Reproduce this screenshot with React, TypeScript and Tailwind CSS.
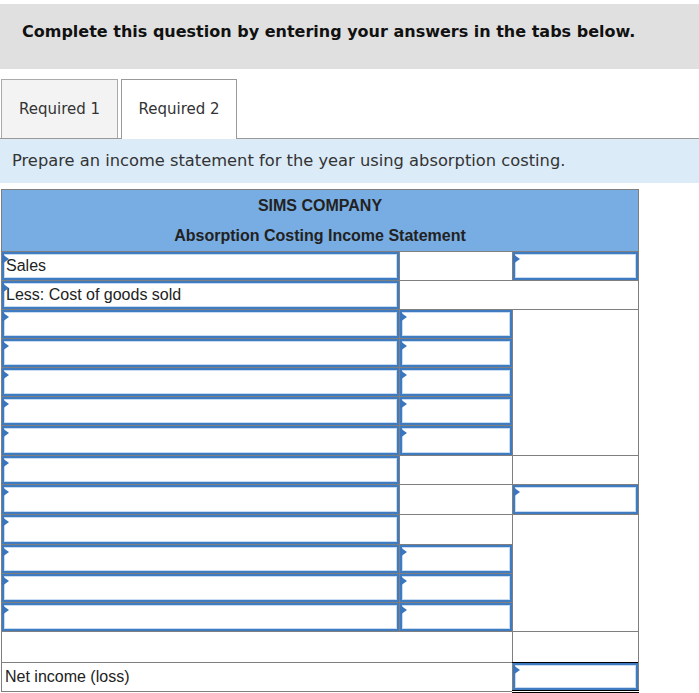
import React from "react";

type Cell =
  | { kind: "input"; text?: string; span?: number; rows?: number; top?: string; bottom?: string }
  | { kind: "empty"; span?: number; rows?: number; top?: string }
  | { kind: "label"; text: string; span?: number };

const Marker = () => (
  <span className="pointer-events-none absolute left-0 top-[2px] h-0 w-0 border-y-[5px] border-l-[7px] border-y-transparent border-l-[#3a76bd]" />
);

const InputBox = ({ text }: { text?: string }) => (
  <div className="relative h-full w-full">
    <div className="h-full w-full border-2 border-[#3f7bc1] bg-white pl-[2px] text-left leading-[24px] shadow-[inset_0_0_0_1px_#c7dcf2]">
      {text}
    </div>
    <Marker />
  </div>
);

const rows: { h: number; cells: Cell[] }[] = [
  { h: 29, cells: [{ kind: "input", text: "Sales" }, { kind: "empty" }, { kind: "input" }] },
  { h: 29, cells: [{ kind: "input", text: "Less: Cost of goods sold" }, { kind: "empty", span: 2 }] },
  { h: 29, cells: [{ kind: "input" }, { kind: "input" }, { kind: "empty", rows: 5 }] },
  { h: 29, cells: [{ kind: "input" }, { kind: "input" }] },
  { h: 29, cells: [{ kind: "input" }, { kind: "input" }] },
  { h: 29, cells: [{ kind: "input" }, { kind: "input" }] },
  { h: 30, cells: [{ kind: "input" }, { kind: "input" }] },
  { h: 29, cells: [{ kind: "input" }, { kind: "empty", top: "black" }, { kind: "empty" }] },
  { h: 30, cells: [{ kind: "input" }, { kind: "empty" }, { kind: "input", top: "black" }] },
  { h: 30, cells: [{ kind: "input" }, { kind: "empty" }, { kind: "empty", rows: 4 }] },
  { h: 29, cells: [{ kind: "input" }, { kind: "input" }] },
  { h: 29, cells: [{ kind: "input" }, { kind: "input" }] },
  { h: 29, cells: [{ kind: "input" }, { kind: "input" }] },
  { h: 31, cells: [{ kind: "empty", span: 2 }, { kind: "empty" }] },
  { h: 29, cells: [{ kind: "label", text: "Net income (loss)", span: 2 }, { kind: "input", top: "black", bottom: "double" }] },
];

export default function App() {
  return (
    <div className="min-h-screen bg-white pt-[4px]">
      <div className="flex h-[65px] items-start bg-[#e0e0e0] pl-[22px] pt-[16px] font-['DejaVu_Sans',Verdana,sans-serif] text-[16px] font-bold text-[#111]">
        Complete this question by entering your answers in the tabs below.
      </div>

      <div className="mt-[10px] flex items-end pl-[1px] font-['DejaVu_Sans',Verdana,sans-serif] text-[15px] text-[#333]">
        <div className="flex h-[59px] w-[117px] items-center justify-center border border-b-0 border-[#aaa] bg-[#f3f3f3]">
          Required 1
        </div>
        <div className="relative z-10 -mb-px ml-[3px] flex h-[60px] w-[116px] items-center justify-center border border-b-0 border-[#999] bg-white">
          Required 2
        </div>
      </div>

      <div className="flex h-[45px] items-center border-t border-[#999] bg-[#dbebf8] pl-[12px] font-['DejaVu_Sans',Verdana,sans-serif] text-[16.3px] text-[#333]">
        Prepare an income statement for the year using absorption costing.
      </div>

      <table className="mt-[6px] ml-[1px] w-[637px] table-fixed border-collapse border border-[#7f7f7f] font-['Liberation_Sans',Arial,sans-serif] text-[16px] text-[#222]">
        <colgroup>
          <col className="w-[398px]" />
          <col className="w-[113px]" />
          <col className="w-[126px]" />
        </colgroup>
        <thead>
          <tr className="bg-[#78ade3]">
            <th colSpan={3} className="h-[31px] pt-[2px] text-center font-bold">
              SIMS COMPANY
            </th>
          </tr>
          <tr className="bg-[#78ade3]">
            <th colSpan={3} className="h-[31px] text-center font-bold">
              Absorption Costing Income Statement
            </th>
          </tr>
        </thead>
        <tbody>
          {rows.map((row, i) => (
            <tr key={i} style={{ height: row.h }}>
              {row.cells.map((cell, j) => {
                const topCls =
                  "top" in cell && cell.top === "black" ? "border-t-black" : "";
                const bottomCls =
                  "bottom" in cell && cell.bottom === "double"
                    ? "border-b-[3px] border-b-black border-double"
                    : "";
                if (cell.kind === "input") {
                  return (
                    <td
                      key={j}
                      colSpan={cell.span}
                      rowSpan={cell.rows}
                      className={`border border-[#7f7f7f] p-0 ${topCls} ${bottomCls}`}
                      style={{ height: row.h }}
                    >
                      <InputBox text={cell.text} />
                    </td>
                  );
                }
                if (cell.kind === "label") {
                  return (
                    <td
                      key={j}
                      colSpan={cell.span}
                      className="border border-[#7f7f7f] p-0 pl-[3px] text-left"
                    >
                      {cell.text}
                    </td>
                  );
                }
                return (
                  <td
                    key={j}
                    colSpan={cell.span}
                    rowSpan={cell.rows}
                    className={`border border-[#7f7f7f] p-0 ${topCls}`}
                  />
                );
              })}
            </tr>
          ))}
        </tbody>
      </table>
    </div>
  );
}
